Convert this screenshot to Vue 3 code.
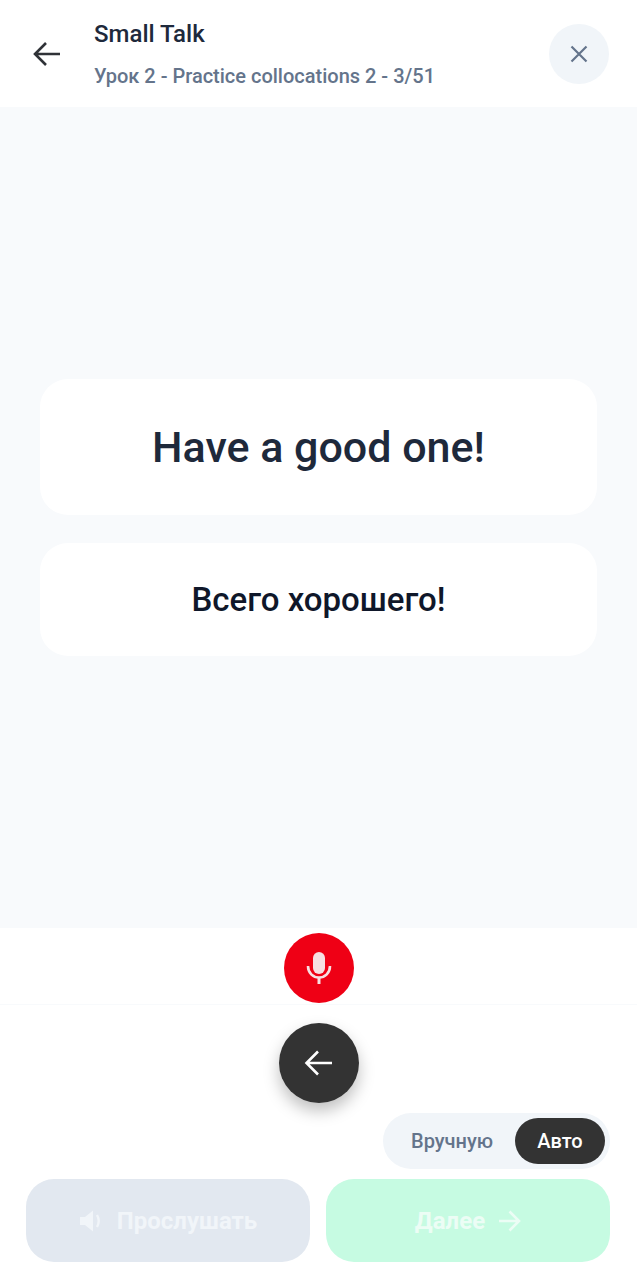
<template>
  <div class="screen">
    <header class="top">
      <button class="back">
        <svg width="30" height="30" viewBox="0 0 30 30" fill="none" stroke="#2f3237" stroke-width="2.6">
          <path d="M28 15H3M14 4 3 15l11 11" />
        </svg>
      </button>
      <div class="titles">
        <p class="title">{{ course }}</p>
        <p class="lesson">{{ lesson }}</p>
      </div>
      <button class="close">
        <svg width="20" height="20" viewBox="0 0 20 20" fill="none" stroke="#64748b" stroke-width="2.2">
          <path d="M2.5 2.5l15 15M17.500 2.500l-15 15" />
        </svg>
      </button>
    </header>

    <main class="content">
      <div class="card card-phrase">Have a good one!</div>
      <div class="card card-translation">Всего хорошего!</div>
    </main>

    <div class="mic-bar">
      <button class="mic">
        <svg width="28" height="34" viewBox="0 0 28 34" fill="none">
          <rect x="8" y="1" width="12" height="22" rx="6" fill="#f7dfe2" />
          <path d="M3 15c0 7 5 11.500 11 11.500S25 22 25 15" stroke="#f7dfe2" stroke-width="2.600" />
          <path d="M14 26v7" stroke="#f7dfe2" stroke-width="3" />
        </svg>
      </button>
    </div>

    <footer class="bottom">
      <div class="round-row">
        <button class="round">
          <svg width="30" height="28" viewBox="0 0 30 28" fill="none" stroke="#fff" stroke-width="2.600">
            <path d="M28 14H3M14 2.500 2.500 14 14 25.500" />
          </svg>
        </button>
      </div>
      <div class="toggle-row">
        <div class="toggle">
          <span class="mode">Вручную</span>
          <span class="mode mode-on">Авто</span>
        </div>
      </div>
      <div class="actions">
        <button class="action listen">
          <svg width="26" height="22" viewBox="0 0 26 22" fill="#f1f5f9">
            <path d="M1 7h5l8-6.500v21L6 15H1z" />
            <path d="M18 5c2 3.500 2 8.500 0 12" fill="none" stroke="#f1f5f9" stroke-width="2.400" />
          </svg>
          Прослушать
        </button>
        <button class="action next">
          Далее
          <svg width="24" height="22" viewBox="0 0 24 22" fill="none" stroke="#ecfdf5" stroke-width="2.600">
            <path d="M2 11h20M12.500 1.500 22 11l-9.500 9.500" />
          </svg>
        </button>
      </div>
    </footer>
  </div>
</template>

<script setup>
const course = 'Small Talk'
const lesson = 'Урок 2 - Practice collocations 2 - 3/51'
</script>

<style>
html,
body {
  margin: 0;
  background: #fff;
}
</style>

<style scoped>
.screen {
  width: 637px;
  height: 1280px;
  display: flex;
  flex-direction: column;
  font-family: Roboto, "Noto Sans", sans-serif;
  background: #fff;
}

button {
  border: 0;
  padding: 0;
  font-family: inherit;
  display: flex;
  align-items: center;
  justify-content: center;
}

.top {
  height: 107px;
  flex: none;
  display: flex;
  align-items: center;
  padding: 0 28px 0 32px;
  box-sizing: border-box;
}

.back {
  width: 30px;
  height: 30px;
  background: none;
}

.titles {
  margin-left: 32px;
  flex: 1;
}

.title {
  margin: 0;
  font-size: 24px;
  font-weight: 500;
  line-height: 28px;
  color: #1e293b;
}

.lesson {
  margin: 16px 0 0;
  font-size: 20px;
  font-weight: 500;
  line-height: 24px;
  color: #64748b;
}

.close {
  width: 60px;
  height: 60px;
  border-radius: 50%;
  background: #f1f5f9;
}

.content {
  height: 821px;
  flex: none;
  background: #f8fafc;
  display: flex;
  flex-direction: column;
  justify-content: center;
  gap: 28px;
  padding: 0 40px;
  box-sizing: border-box;
}

.card {
  background: #fff;
  border-radius: 28px;
  display: flex;
  align-items: center;
  justify-content: center;
}

.card-phrase {
  height: 136px;
  font-size: 43px;
  font-weight: 500;
  color: #1e293b;
}

.card-translation {
  height: 113px;
  font-size: 33px;
  font-weight: 500;
  color: #0f172a;
}

.mic-bar {
  height: 77px;
  flex: none;
  display: flex;
  justify-content: center;
  padding-top: 5px;
  box-sizing: border-box;
  border-bottom: 1px solid #f8fafc;
}

.mic {
  width: 70px;
  height: 70px;
  border-radius: 50%;
  background: #ef0015;
}

.bottom {
  flex: 1;
  padding: 18px 27px 0 26px;
}

.round-row {
  display: flex;
  justify-content: center;
  padding-left: 1px;
}

.round {
  width: 80px;
  height: 80px;
  border-radius: 50%;
  background: #333;
  box-shadow: 0 8px 16px rgba(0, 0, 0, 0.25);
}

.toggle-row {
  display: flex;
  justify-content: flex-end;
  margin-top: 10px;
}

.toggle {
  width: 227px;
  height: 56px;
  border-radius: 28px;
  background: #f1f5f9;
  display: flex;
  align-items: center;
  justify-content: space-between;
  padding: 0 5px 0 28px;
  box-sizing: border-box;
}

.mode {
  font-size: 20px;
  font-weight: 500;
  color: #64748b;
}

.mode-on {
  width: 90px;
  height: 46px;
  border-radius: 23px;
  background: #333;
  color: #fff;
  display: flex;
  align-items: center;
  justify-content: center;
}

.actions {
  display: flex;
  gap: 16px;
  margin-top: 10px;
}

.action {
  width: 284px;
  height: 83px;
  border-radius: 28px;
  font-size: 24px;
  font-weight: 700;
  gap: 12px;
}

.listen {
  background: #e2e8f0;
  color: #f1f5f9;
}

.next {
  background: #c6fbe2;
  color: #ecfdf5;
}
</style>
